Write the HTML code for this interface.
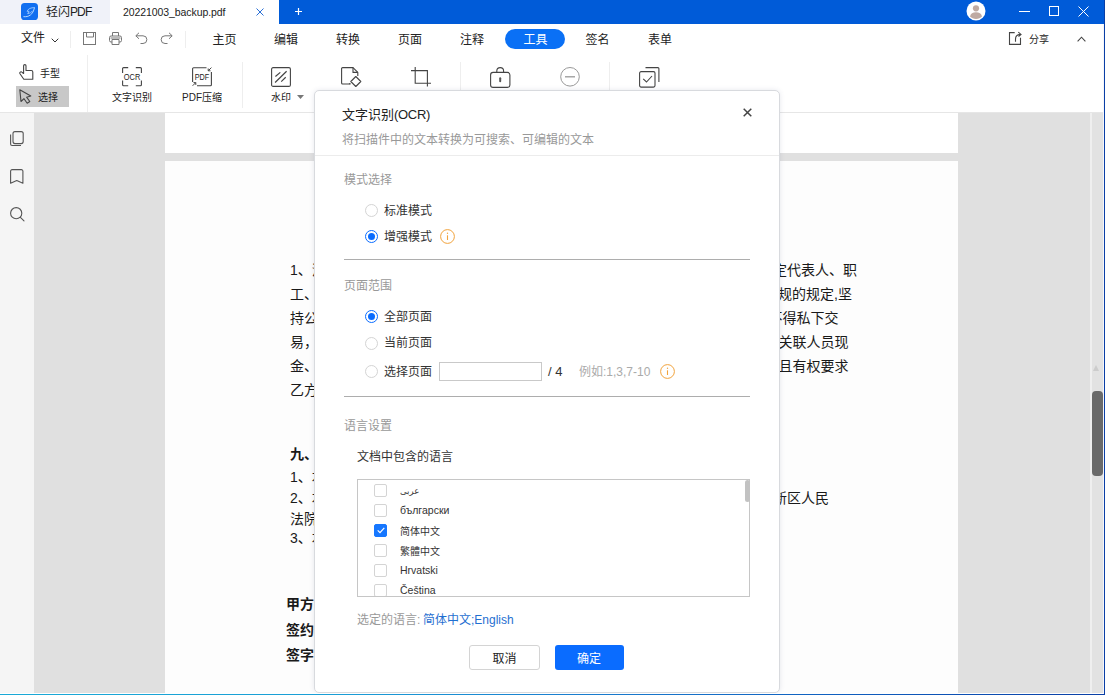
<!DOCTYPE html>
<html lang="zh-CN">
<head>
<meta charset="utf-8">
<title>轻闪PDF</title>
<style>
*{box-sizing:border-box;margin:0;padding:0}
html,body{width:1105px;height:695px;overflow:hidden;background:#fff}
body{font-family:"Liberation Sans","Noto Sans CJK SC","DejaVu Sans",sans-serif;color:#222;position:relative;font-size:13px}
.abs{position:absolute}
.t{position:absolute;white-space:nowrap;line-height:1}
svg{position:absolute;overflow:visible}
/* title bar */
#titlebar{left:0;top:0;width:1105px;height:24px;background:#005bd8}
#apptab{left:0;top:0;width:110px;height:24px;background:#f0f2f9}
#doctab{left:110px;top:0;width:169px;height:24px;background:#fff}
/* menu */
#menurow{left:0;top:24px;width:1105px;height:31px;background:#fff}
.mi{position:absolute;top:33px;font-size:12px;line-height:14px;color:#222;white-space:nowrap;transform:translateX(-50%)}
/* toolbar */
#toolbar{left:0;top:55px;width:1105px;height:58px;background:#fff;border-bottom:1px solid #e6e6e6}
.sep{position:absolute;width:1px;background:#eeeeee}
.tl{position:absolute;font-size:10px;line-height:12px;color:#222;white-space:nowrap;transform:translateX(-50%)}
/* body */
#sidebar{left:0;top:113px;width:34px;height:582px;background:#f5f5f5}
#docarea{left:34px;top:113px;width:1056px;height:582px;background:#e0e0e0}
#page1{left:165px;top:113px;width:793px;height:40px;background:#fff}
#page2{left:165px;top:161px;width:793px;height:534px;background:#fdfdfd}
.dl{position:absolute;font-size:14px;line-height:16px;color:#1a1a1a;white-space:nowrap}
.dlb{font-weight:bold}
/* dialog */
#dialog{left:314px;top:90px;width:466px;height:603px;background:#fff;border:1px solid #d8dade;border-radius:5px;box-shadow:0 0 5px rgba(70,80,120,.13)}
.dt{position:absolute;white-space:nowrap;line-height:14px}
.gray{color:#999}
.radio{position:absolute;width:13px;height:13px;border-radius:50%;border:1px solid #d4d4d4;background:#fff}
.radio.on{border:1px solid #0a6cff}
.radio.on::after{content:"";position:absolute;left:2px;top:2px;width:7px;height:7px;border-radius:50%;background:#0a6cff}
.hr{position:absolute;left:344px;width:406px;height:1px;background:#adadad}
.cb{position:absolute;left:374px;width:13px;height:13px;border:1px solid #d4d4d4;border-radius:2px;background:#fff}
.ll{position:absolute;left:400px;font-size:10.5px;line-height:12px;color:#333;white-space:nowrap}
</style>
</head>
<body>
<!-- TITLE BAR -->
<div id="titlebar" class="abs"></div>
<div id="apptab" class="abs"></div>
<div id="doctab" class="abs"></div>
<svg style="left:21px;top:3px" width="17" height="17" viewBox="0 0 17 17"><rect width="17" height="17" rx="3.600" fill="#116ff0"/><path d="M2.800 13.700c4.800.5 9.200-1.900 10.600-8.700" fill="none" stroke="#b5d8ff" stroke-width="1" stroke-linecap="round"/><path d="M13.400 4.600c-3.600-.1-6.300 1.200-7.300 3.700l1.900.1-1.300 2.300c2.200-.5 3.700-1.400 4.800-2.700" fill="none" stroke="#9ccaff" stroke-width=".9" stroke-linejoin="round" stroke-linecap="round"/></svg>
<div class="t" style="left:46px;top:5px;font-size:12px;line-height:14px;color:#222">轻闪<span style="letter-spacing:-0.9px">PDF</span></div>
<div class="t" id="tabname" style="left:123px;top:6px;font-size:10.500px;line-height:12px;color:#222;letter-spacing:-0.08px">20221003_backup.pdf</div>
<svg style="left:256px;top:8px" width="8" height="8" viewBox="0 0 8 8"><path d="M.5.5l7 7M7.500.5l-7 7" stroke="#2a6fd6" stroke-width="1"/></svg>
<svg style="left:295px;top:8px" width="7" height="7" viewBox="0 0 7 7"><path d="M3.500 0v7M0 3.500h7" stroke="#fff" stroke-width="1.200"/></svg>
<svg style="left:966px;top:1px" width="20" height="20" viewBox="0 0 20 20"><circle cx="10" cy="10" r="9.500" fill="#fff"/><circle cx="10" cy="7.300" r="3.100" fill="#bfaaa2"/><path d="M4 15.500c.6-3 2.800-4.300 6-4.300s5.400 1.300 6 4.300c-1.500 1.600-3.500 2.500-6 2.500s-4.500-.9-6-2.500z" fill="#bfaaa2"/></svg>
<svg style="left:1019px;top:11px" width="12" height="1" viewBox="0 0 12 1"><path d="M0 .5h11" stroke="#fff" stroke-width="1"/></svg>
<svg style="left:1049px;top:6px" width="10" height="10" viewBox="0 0 10 10"><rect x=".5" y=".5" width="9" height="9" fill="none" stroke="#fff" stroke-width="1"/></svg>
<svg style="left:1078px;top:6px" width="11" height="11" viewBox="0 0 11 11"><path d="M.5.5l10 10M10.500.5l-10 10" stroke="#fff" stroke-width="1"/></svg>
<!-- MENU ROW -->
<div id="menurow" class="abs"></div>
<div class="t" style="left:21px;top:31px;font-size:12px;line-height:14px;color:#222">文件</div>
<svg style="left:51px;top:38px" width="8" height="5" viewBox="0 0 8 5"><path d="M.7.700l3.300 3.300 3.300-3.300" fill="none" stroke="#333" stroke-width="1"/></svg>
<div class="sep" style="left:70px;top:31px;height:17px"></div>
<svg style="left:83px;top:32px" width="13" height="13" viewBox="0 0 13 13" fill="none" stroke="#777" stroke-width="1"><rect x=".5" y=".5" width="12" height="12"/><path d="M3.500.5v4.500h7V.5"/></svg>
<svg style="left:109px;top:32px" width="13" height="13" viewBox="0 0 13 13" fill="none" stroke="#777" stroke-width="1"><path d="M3.500 4V.5h6V4"/><rect x=".5" y="4" width="12" height="6" rx="1.500"/><path d="M3 7.500h7v5H3z" fill="#fff"/><path d="M1.500 6h10" stroke-width="1"/></svg>
<svg style="left:135px;top:32px" width="13" height="13" viewBox="0 0 13 13" fill="none" stroke="#777" stroke-width="1"><path d="M4 .8L.8 3.800 4 6.800M1 3.800h7a3.800 3.800 0 0 1 0 7.700H5.500"/></svg>
<svg style="left:160px;top:32px" width="13" height="13" viewBox="0 0 13 13" fill="none" stroke="#777" stroke-width="1"><path d="M9 .8l3.200 3L9 6.800M12 3.800H5a3.800 3.800 0 0 0 0 7.700h2.500"/></svg>
<div class="sep" style="left:185px;top:31px;height:17px"></div>
<div class="mi" style="left:224.500px">主页</div>
<div class="mi" style="left:286px">编辑</div>
<div class="mi" style="left:348px">转换</div>
<div class="mi" style="left:410px">页面</div>
<div class="mi" style="left:472px">注释</div>
<div class="abs" style="left:505px;top:29px;width:60px;height:20px;border-radius:10px;background:#0a70f5"></div>
<div class="mi" style="left:535.500px;color:#fff">工具</div>
<div class="mi" style="left:597.500px">签名</div>
<div class="mi" style="left:660px">表单</div>
<svg style="left:1008px;top:32px" width="14" height="13" viewBox="0 0 14 13" fill="none" stroke="#444" stroke-width="1.100"><path d="M6.700 .6H1.500V12.400H12.500V5.700"/><path d="M7.500 9.800V7.200C7.500 4.200 9.500 2.400 12.600 2.400M10.300 .1L13 2.400 10.500 4.500"/></svg>
<div class="t" style="left:1029px;top:34px;font-size:10px;line-height:12px;color:#222">分享</div>
<svg style="left:1077px;top:36px" width="9" height="6" viewBox="0 0 9 6"><path d="M.6 5.300L4.500 1.200l3.900 4.100" fill="none" stroke="#444" stroke-width="1.100"/></svg>
<!-- TOOLBAR -->
<div id="toolbar" class="abs"></div>
<svg style="left:19px;top:64px" width="15" height="16" viewBox="0 0 15 16" fill="none" stroke="#444" stroke-width="1.100" stroke-linejoin="round" stroke-linecap="round"><path d="M4.600 9.500V1.800a1.200 1.200 0 0 1 2.400 0v4.700h5.300c.9 0 1.500.6 1.500 1.500v7.300H4.800L1 9.700c-.5-.8-.2-1.500.5-1.800.7-.3 1.300 0 1.800.6z"/></svg>
<div class="t" style="left:40px;top:68px;font-size:10px;line-height:12px;color:#222">手型</div>
<div class="abs" style="left:16px;top:86px;width:53px;height:21px;background:#c8c8c8"></div>
<svg style="left:19px;top:89px" width="13" height="15" viewBox="0 0 13 15" fill="none" stroke="#444" stroke-width="1.100" stroke-linejoin="round"><path d="M.8.800l1.200 11.700 3-2.800 3.200 4.500 2.600-1.700-3.200-4.300 4.200-1.200z"/></svg>
<div class="t" style="left:38px;top:92px;font-size:10px;line-height:12px;color:#222">选择</div>
<div class="sep" style="left:87px;top:55px;height:57px"></div>
<svg style="left:122px;top:67px" width="20" height="20" viewBox="0 0 20 20" fill="none" stroke="#444" stroke-width="1.100"><path d="M6.200 .6H1.600a1 1 0 0 0-1 1V6M13.800 .6h4.600a1 1 0 0 1 1 1V6M6.200 18.800H1.600a1 1 0 0 1-1-1V13.500M13.800 18.800h4.600a1 1 0 0 0 1-1V13.500"/><text x="10" y="13.100" font-family="Liberation Sans,sans-serif" font-size="8.600" text-anchor="middle" fill="#222" stroke="none" textLength="16.500" lengthAdjust="spacingAndGlyphs">OCR</text></svg>
<div class="tl" style="left:132px;top:91.500px">文字识别</div>
<svg style="left:192px;top:67px" width="20" height="20" viewBox="0 0 20 20" fill="none" stroke="#444" stroke-width="1.100"><path d="M14.500 .8H1.600a1 1 0 0 0-1 1V15M5 18.800h13.400a1 1 0 0 0 1-1V5"/><path d="M19.400.6l-3 3M16.200 1.500v2.300h2.300M.6 18.800l3-3M3.800 17.900v-2.300H1.500" stroke-width="1"/><text x="10" y="13.100" font-family="Liberation Sans,sans-serif" font-size="8.600" text-anchor="middle" fill="#222" stroke="none" textLength="14.500" lengthAdjust="spacingAndGlyphs">PDF</text></svg>
<div class="tl" style="left:202px;top:91.500px">PDF压缩</div>
<div class="sep" style="left:242px;top:62px;height:46px"></div>
<svg style="left:271px;top:67px" width="20" height="20" viewBox="0 0 20 20" fill="none" stroke="#444" stroke-width="1.100"><rect x=".6" y=".6" width="18.800" height="18.800" rx="1.500"/><path d="M4.400 9.500l4.900-4.100M4.100 15.500L15.600 4.300M10.200 14.600l4.500-4.300" stroke-width="1.200"/></svg>
<div class="tl" style="left:281px;top:91.500px">水印</div>
<svg style="left:297px;top:95px" width="7" height="4" viewBox="0 0 7 4"><path d="M0 0h7L3.500 4z" fill="#777"/></svg>
<svg style="left:341px;top:67px" width="21" height="21" viewBox="0 0 21 21" fill="none" stroke="#444" stroke-width="1.100" stroke-linejoin="round"><path d="M8 17H1.600a1 1 0 0 1-1-1V1.600a1 1 0 0 1 1-1H12l4.800 4.800V9"/><path d="M12 .6v4.800h4.800"/><path d="M14.800 9.500l5 5-5 5-5-5z"/><circle cx="8.800" cy="16.800" r=".9" fill="#444" stroke="none"/></svg>
<svg style="left:411px;top:67px" width="20" height="20" viewBox="0 0 20 20" fill="none" stroke="#444" stroke-width="1.100"><path d="M4.200 0v16.300H20M0 3.600h16.400V19.600"/></svg>
<div class="sep" style="left:460px;top:62px;height:46px"></div>
<svg style="left:490px;top:67px" width="21" height="21" viewBox="0 0 21 21" fill="none" stroke="#444" stroke-width="1.100"><rect x=".6" y="5.400" width="19.300" height="15" rx="2.500"/><path d="M6.800 5.400V4a3.400 3.400 0 0 1 6.800 0v1.400"/><rect x="9.200" y="10.300" width="2" height="5" rx="1" fill="#555" stroke="none"/></svg>
<svg style="left:560px;top:67px" width="20" height="20" viewBox="0 0 20 20" fill="none" stroke="#999" stroke-width="1"><circle cx="10" cy="9.800" r="9.300"/><path d="M5 9.800h10" stroke-width="1.300"/></svg>
<div class="sep" style="left:609px;top:62px;height:46px"></div>
<svg style="left:639px;top:67px" width="21" height="21" viewBox="0 0 21 21" fill="none" stroke="#444" stroke-width="1.100"><rect x=".6" y="4.600" width="15.400" height="15.500" rx="1.500"/><path d="M6.500 .6h12.400a1 1 0 0 1 1 1V15"/><path d="M4.200 11.800l3.300 3.200 5.500-6"/></svg>
<!-- BODY -->
<div id="docarea" class="abs"></div>
<div id="sidebar" class="abs"></div>
<div id="page1" class="abs"></div>
<div id="page2" class="abs"></div>
<svg style="left:10px;top:131px" width="14" height="15" viewBox="0 0 14 15" fill="none" stroke="#555" stroke-width="1.100" stroke-linejoin="round"><rect x="3" y=".6" width="10.200" height="12" rx="2"/><path d="M.6 3.500v9.500a1.500 1.500 0 0 0 1.500 1.500H11"/></svg>
<svg style="left:10px;top:169px" width="14" height="15" viewBox="0 0 14 15" fill="none" stroke="#555" stroke-width="1.100" stroke-linejoin="round"><path d="M.6 2.100a1.500 1.500 0 0 1 1.500-1.500h9.300a1.500 1.500 0 0 1 1.500 1.500V14.200L6.750 11.600.6 14.200z"/></svg>
<svg style="left:10px;top:207px" width="15" height="15" viewBox="0 0 15 15" fill="none" stroke="#555" stroke-width="1.100" stroke-linecap="round"><circle cx="6.200" cy="6.200" r="5.600"/><path d="M10.400 10.400l3.600 3.400"/></svg>
<!-- DOC TEXT -->
<div class="dl" style="left:290px;top:262px">1、法</div>
<div class="dl" style="left:290px;top:286px">工、</div>
<div class="dl" style="left:290px;top:310px">持公平</div>
<div class="dl" style="left:290px;top:334px">易，</div>
<div class="dl" style="left:290px;top:358px">金、</div>
<div class="dl" style="left:290px;top:382px">乙方</div>
<div class="dl" style="right:248px;top:262px">定代表人、职</div>
<div class="dl" style="right:253px;top:286px">规的规定,坚</div>
<div class="dl" style="right:266.500px;top:310px">不得私下交</div>
<div class="dl" style="right:256.500px;top:334px">关联人员现</div>
<div class="dl" style="right:256.500px;top:358px">且有权要求</div>
<div class="dl dlb" style="left:290px;top:446px">九、</div>
<div class="dl" style="left:290px;top:468.500px">1、本</div>
<div class="dl" style="left:290px;top:490px">2、本</div>
<div class="dl" style="left:290px;top:511px">法院</div>
<div class="dl" style="left:290px;top:530px">3、本</div>
<div class="dl" style="right:276px;top:490px">新区人民</div>
<div class="dl dlb" style="left:286px;top:596px">甲方</div>
<div class="dl dlb" style="left:286px;top:622px">签约代</div>
<div class="dl dlb" style="left:286px;top:647px">签字</div>
<!-- SCROLLBAR -->
<div class="abs" style="left:1090px;top:113px;width:2px;height:582px;background:#efefef"></div>
<div class="abs" style="left:1092px;top:113px;width:12px;height:582px;background:#e2e2e2"></div>
<div class="abs" style="left:1092px;top:391px;width:11px;height:85px;background:#6a6a6a;border-radius:4px"></div>
<svg style="left:1093px;top:365px" width="6" height="6" viewBox="0 0 6 6"><path d="M3 0l3 6H0z" fill="#ccc"/></svg>
<!-- DIALOG -->
<div id="dialog" class="abs"></div>
<div class="dt" style="left:342px;top:107.500px;font-size:13px;color:#222">文字识别<span style="letter-spacing:-0.3px">(OCR)</span></div>
<svg style="left:743px;top:108px" width="9" height="9" viewBox="0 0 9 9"><path d="M.7.700l7.600 7.600M8.300.7L.7 8.300" stroke="#444" stroke-width="1.500"/></svg>
<div class="dt gray" style="left:342px;top:133px;font-size:12px">将扫描件中的文本转换为可搜索、可编辑的文本</div>
<div class="abs" style="left:315px;top:155px;width:464px;height:1px;background:#ececec"></div>
<div class="dt gray" style="left:344px;top:173px;font-size:12px">模式选择</div>
<div class="radio" style="left:365px;top:204px"></div>
<div class="dt" style="left:384px;top:203.500px;font-size:12px;color:#333">标准模式</div>
<div class="radio on" style="left:365px;top:230px"></div>
<div class="dt" style="left:384px;top:229.500px;font-size:12px;color:#333">增强模式</div>
<svg style="left:440px;top:229px" width="15" height="15" viewBox="0 0 15 15" fill="none" stroke="#f2a33c" stroke-width="1"><circle cx="7.500" cy="7.500" r="6.900"/><path d="M7.500 6.300v4.700" stroke-width="1.100"/><circle cx="7.500" cy="4.300" r=".7" fill="#f2a33c" stroke="none"/></svg>
<div class="hr" style="top:259px"></div>
<div class="dt gray" style="left:344px;top:279px;font-size:12px">页面范围</div>
<div class="radio on" style="left:365px;top:310px"></div>
<div class="dt" style="left:384px;top:309.500px;font-size:12px;color:#333">全部页面</div>
<div class="radio" style="left:365px;top:336.500px"></div>
<div class="dt" style="left:384px;top:336px;font-size:12px;color:#333">当前页面</div>
<div class="radio" style="left:365px;top:365px"></div>
<div class="dt" style="left:384px;top:364.500px;font-size:12px;color:#333">选择页面</div>
<div class="abs" style="left:439px;top:362px;width:103px;height:19px;border:1px solid #c9c9c9;background:#fff"></div>
<div class="dt" style="left:548px;top:365px;font-size:13px;color:#333">/ 4</div>
<div class="dt" style="left:579px;top:364.500px;font-size:12px;color:#aaa">例如:1,3,7-10</div>
<svg style="left:660px;top:364px" width="15" height="15" viewBox="0 0 15 15" fill="none" stroke="#f2a33c" stroke-width="1"><circle cx="7.500" cy="7.500" r="6.900"/><path d="M7.500 6.300v4.700" stroke-width="1.100"/><circle cx="7.500" cy="4.300" r=".7" fill="#f2a33c" stroke="none"/></svg>
<div class="hr" style="top:396px"></div>
<div class="dt gray" style="left:344px;top:419px;font-size:12px">语言设置</div>
<div class="dt" style="left:357px;top:450px;font-size:12px;color:#333">文档中包含的语言</div>
<div class="abs" style="left:357px;top:479px;width:393px;height:118px;border:1px solid #c6c6c6;background:#fff;overflow:hidden"></div>
<div class="abs" id="listclip" style="left:358px;top:480px;width:391px;height:116px;overflow:hidden"><div style="position:absolute;left:-358px;top:-480px">
<div class="cb" style="top:484px"></div>
<div class="ll" style="top:485px;font-size:8.500px">عربى</div>
<div class="cb" style="top:504px"></div>
<div class="ll" style="top:504px;font-size:10.500px">български</div>
<div class="cb" style="top:524px;background:#1677ff;border-color:#1677ff"></div><svg style="left:377px;top:527px" width="8" height="7" viewBox="0 0 8 7"><path d="M.7 3.300l2.300 2.300L7.300.9" fill="none" stroke="#fff" stroke-width="1.200"/></svg>
<div class="ll" style="top:525.500px;font-size:10px">简体中文</div>
<div class="cb" style="top:544px"></div>
<div class="ll" style="top:545.500px;font-size:10px">繁體中文</div>
<div class="cb" style="top:564px"></div>
<div class="ll" style="top:564px;font-size:10.500px">Hrvatski</div>
<div class="cb" style="top:584px"></div>
<div class="ll" style="top:584px;font-size:10.500px">Čeština</div>
</div></div>
<div class="abs" style="left:744.500px;top:480px;width:5px;height:22px;background:#c2c2c2;border-radius:2.500px"></div>
<div class="dt gray" style="left:357px;top:613px;font-size:12px">选定的语言:</div>
<div class="dt" style="left:423px;top:613px;font-size:12px;color:#1f6fd1">简体中文;English</div>
<div class="abs" style="left:469px;top:645px;width:71px;height:25px;border:1px solid #d4d4d4;border-radius:3px;background:#fff"></div>
<div class="dt" style="left:492.500px;top:652px;font-size:12px;color:#222">取消</div>
<div class="abs" style="left:555px;top:645px;width:69px;height:25px;border-radius:3px;background:#0a6cff"></div>
<div class="dt" style="left:577px;top:652px;font-size:12px;color:#fff">确定</div>
<div class="abs" style="left:0;top:693px;width:1105px;height:1px;background:#fff"></div>
<div class="abs" style="left:0;top:694px;width:1105px;height:1px;background:linear-gradient(90deg,#1aa9d6 0,#1a9ed6 30%,#1a80d0 50%,#1060c0 75%,#0a3fa6 100%)"></div>
<div class="abs" style="left:1103px;top:24px;width:1px;height:670px;background:#f4f6fb"></div>
<div class="abs" style="left:1104px;top:0;width:1px;height:695px;background:#0a3fa6"></div>
</body>
</html>
